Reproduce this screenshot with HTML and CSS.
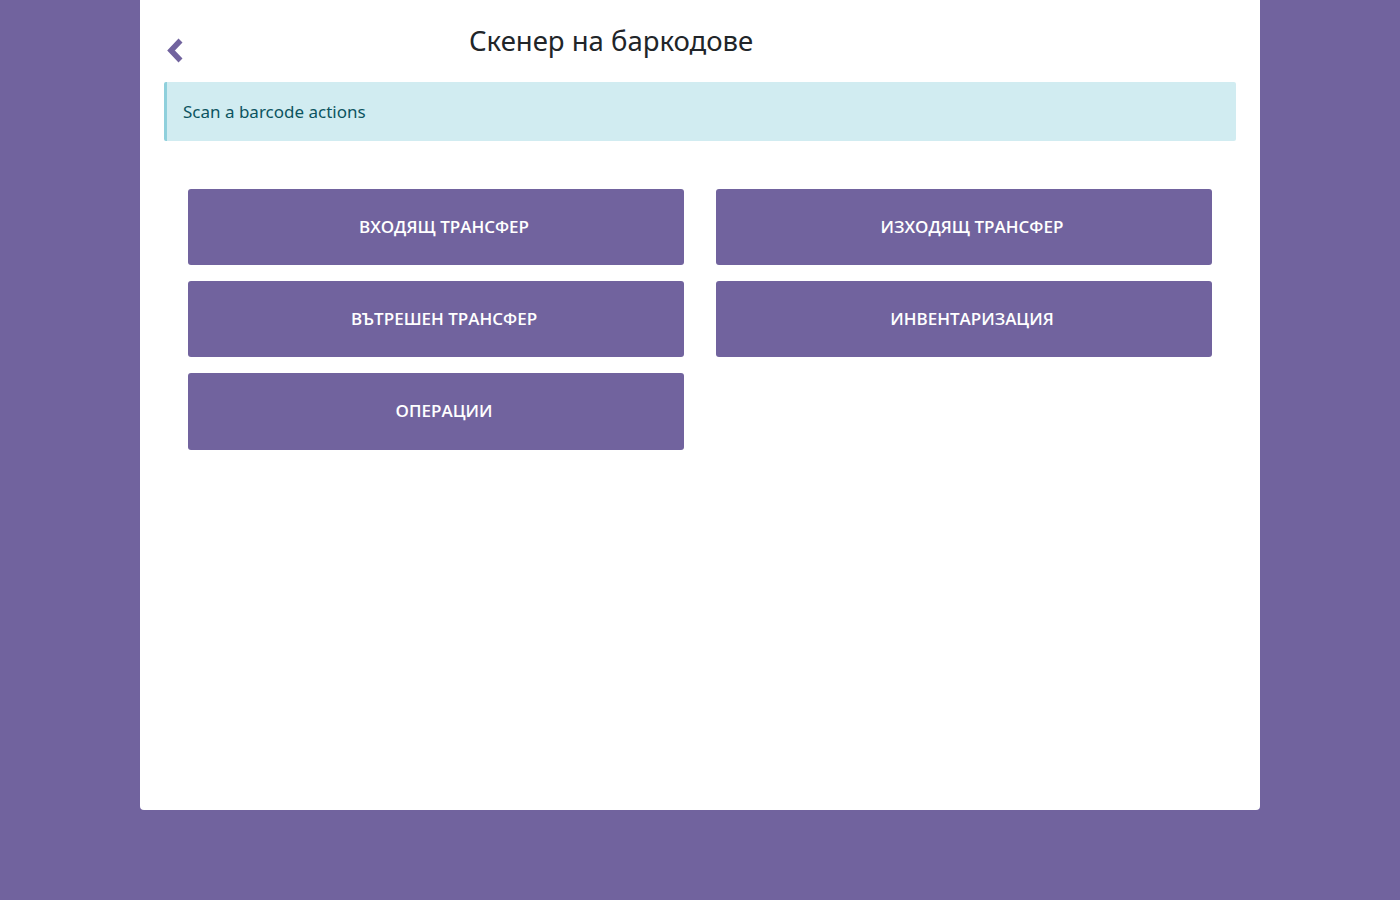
FILE: index.html
```html
<!DOCTYPE html>
<html lang="bg">
<head>
<meta charset="utf-8">
<title>Скенер на баркодове</title>
<link rel="stylesheet" href="styles.css">
</head>
<body>
<div class="sheet">
  <header class="sheet-head">
    <a class="back" href="#" aria-label="Назад">
      <svg width="22" height="28" viewBox="0 0 22 28"><path d="M16.5 3.5 L7 13.5 L16.5 23.5" fill="none" stroke="currentColor" stroke-width="5.5" stroke-linejoin="miter" stroke-linecap="butt"/></svg>
    </a>
    <h1 class="title">Скенер на баркодове</h1>
  </header>
  <div class="alert">Scan a barcode actions</div>
  <div class="menu">
    <button class="menu-btn">ВХОДЯЩ ТРАНСФЕР</button>
    <button class="menu-btn">ИЗХОДЯЩ ТРАНСФЕР</button>
    <button class="menu-btn">ВЪТРЕШЕН ТРАНСФЕР</button>
    <button class="menu-btn">ИНВЕНТАРИЗАЦИЯ</button>
    <button class="menu-btn">ОПЕРАЦИИ</button>
  </div>
</div>
</body>
</html>
```
FILE: styles.css
```css
html, body {
  margin: 0;
  height: 100%;
}
body {
  background: #71639e;
  font-family: "Open Sans", "Noto Sans", sans-serif;
}
.sheet {
  width: 1120px;
  height: 810px;
  margin: 0 auto;
  background: #fff;
  border-radius: 0 0 4px 4px;
  padding: 0 24px;
  box-sizing: border-box;
}
.sheet-head {
  display: flex;
  align-items: flex-start;
  height: 82px;
}
.back {
  color: #71639e;
  margin-top: 37px;
  width: 22px;
  height: 28px;
  display: block;
}
.back svg { display: block; }
.title {
  margin: 23px 0 0 283px;
  font-family: "Noto Sans", sans-serif;
  font-weight: 400;
  font-size: 27.5px;
  line-height: 36px;
  color: #212529;
}
.alert {
  height: 59px;
  box-sizing: border-box;
  background: #d1ecf1;
  border-left: 3px solid #8fd0dc;
  border-radius: 2px;
  color: #0c5460;
  font-family: "Noto Sans", sans-serif;
  font-size: 17px;
  padding: 0 16px;
  display: flex;
  align-items: center;
}
.menu {
  display: grid;
  grid-template-columns: 496px 496px;
  column-gap: 32px;
  row-gap: 16px;
  padding: 48px 24px 0;
}
.menu-btn {
  height: 76px;
  border: 0;
  border-radius: 3px;
  background: #71639e;
  color: #fff;
  font-family: "Open Sans", sans-serif;
  font-size: 17px;
  font-weight: 600;
  cursor: pointer;
  padding: 0 0 2px 16px;
}
.menu-btn:last-child {
  height: 77px;
}
```
